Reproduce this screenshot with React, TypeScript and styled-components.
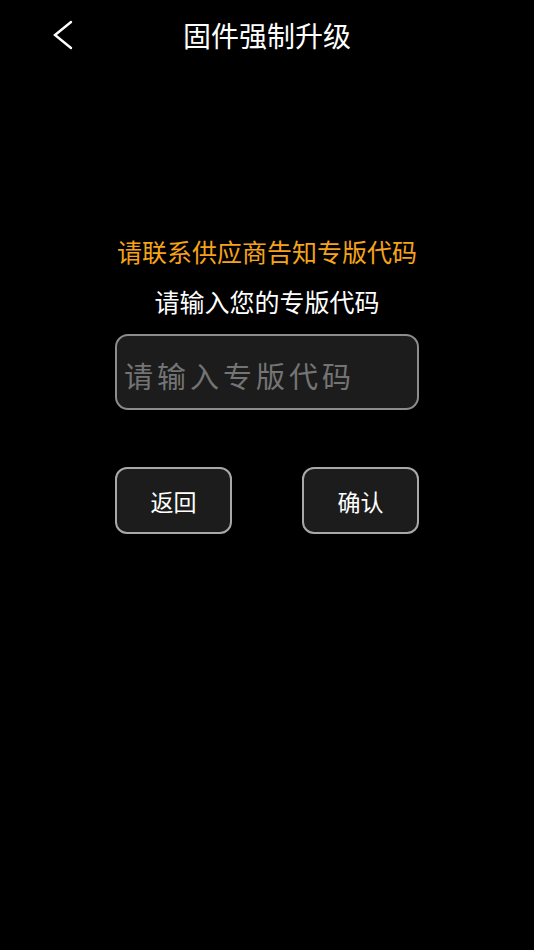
import React from "react";
import styled, { createGlobalStyle } from "styled-components";

const Global = createGlobalStyle`
  html, body { margin: 0; padding: 0; background: #000; }
  body { font-family: "Noto Sans CJK SC", "Noto Sans", sans-serif; }
  * { box-sizing: border-box; }
`;

const Page = styled.div`
  width: 534px;
  height: 950px;
  background: #000;
  color: #fff;
  display: flex;
  flex-direction: column;
`;

const Header = styled.header`
  height: 70px;
  display: grid;
  grid-template-columns: 100px 1fr 100px;
  align-items: center;
`;

const BackBtn = styled.button`
  background: none;
  border: none;
  padding: 0 0 0 52px;
  display: flex;
  align-items: center;
  height: 100%;
  cursor: pointer;
`;

const Title = styled.h1`
  margin: 0;
  font-size: 28px;
  font-weight: 400;
  text-align: center;
  color: #fff;
  line-height: 1;
  padding-bottom: 1px;
`;

const Content = styled.main`
  display: flex;
  flex-direction: column;
  align-items: center;
  padding-top: 163px;
`;

const Notice = styled.p`
  margin: 0;
  font-size: 25px;
  color: #f5a31a;
  line-height: 36px;
`;

const Prompt = styled.p`
  margin: 15px 0 0;
  font-size: 25px;
  color: #fff;
  line-height: 34px;
`;

const Input = styled.input`
  margin-top: 16px;
  width: 304px;
  height: 76px;
  background: #1c1c1c;
  border: 2px solid #8c8c8c;
  border-radius: 13px;
  padding: 6px 0 0 7px;
  color: #fff;
  font-family: "Noto Sans CJK SC", sans-serif;
  font-size: 29px;
  letter-spacing: 4px;
  outline: none;
  &::placeholder { color: #747474; }
`;

const Buttons = styled.div`
  margin-top: 57px;
  width: 304px;
  display: flex;
  justify-content: space-between;
`;

const ActionBtn = styled.button`
  width: 117px;
  height: 67px;
  background: #1c1c1c;
  border: 2px solid #a8a8a8;
  border-radius: 12px;
  color: #fff;
  font-family: "Noto Sans CJK SC", sans-serif;
  font-size: 23px;
  padding: 0;
  cursor: pointer;
`;

export default function App() {
  return (
    <>
      <Global />
      <Page>
        <Header>
          <BackBtn aria-label="back">
            <svg width="22" height="30" viewBox="0 0 22 30">
              <polyline points="19,2 3,15 19,28" fill="none" stroke="#fff" strokeWidth="2.4" strokeLinecap="round" strokeLinejoin="miter" />
            </svg>
          </BackBtn>
          <Title>固件强制升级</Title>
          <div />
        </Header>
        <Content>
          <Notice>请联系供应商告知专版代码</Notice>
          <Prompt>请输入您的专版代码</Prompt>
          <Input placeholder="请输入专版代码" />
          <Buttons>
            <ActionBtn>返回</ActionBtn>
            <ActionBtn>确认</ActionBtn>
          </Buttons>
        </Content>
      </Page>
    </>
  );
}
